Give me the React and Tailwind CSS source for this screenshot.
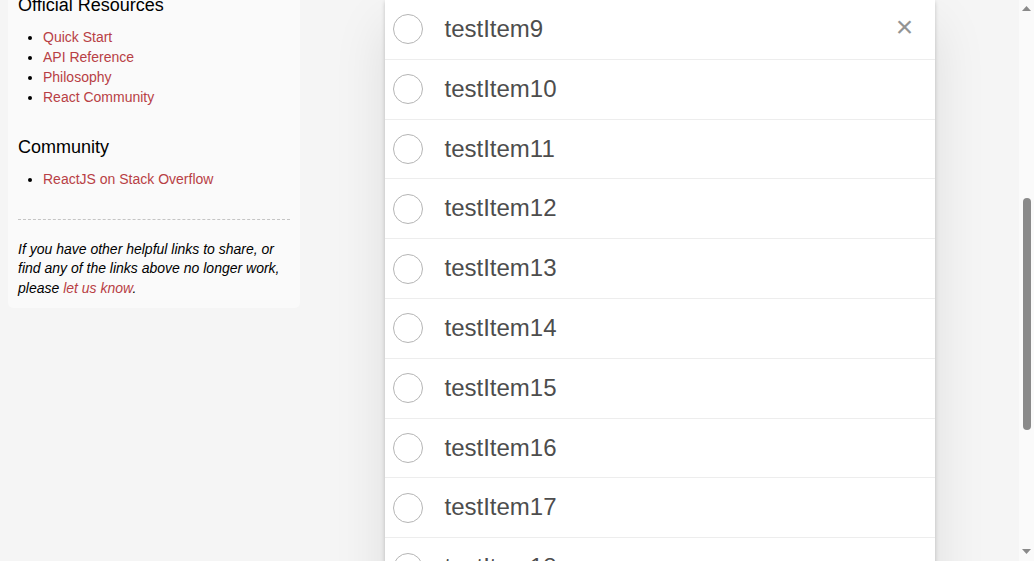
import React from "react";

// Sidebar with learning links, scrolled partly out of view
const Sidebar = () => (
  <aside className="ml-[8px] mt-[-14.6px] w-[292px] shrink-0 rounded-b-[5px] bg-[#fafafa] px-[10px] pb-[10px] text-black">
    <h4 className="my-[10px] text-[18px] leading-[1.2] font-normal">Official Resources</h4>
    <ul className="mb-[30px] ml-[25px] list-disc">
      {["Quick Start", "API Reference", "Philosophy", "React Community"].map((t) => (
        <li key={t} className="leading-[20px]">
          <a href="#" className="text-[#b83f45]">{t}</a>
        </li>
      ))}
    </ul>
    <h4 className="my-[10px] text-[18px] leading-[1.2] font-normal">Community</h4>
    <ul className="mb-[30px] ml-[25px] list-disc">
      <li className="leading-[20px]">
        <a href="#" className="text-[#b83f45]">ReactJS on Stack Overflow</a>
      </li>
    </ul>
    <footer>
      <hr className="my-[20px] border-0 border-t border-dashed border-t-[#c5c5c5]" />
      <em className="block">
        If you have other helpful links to share, or find any of the links above no longer work, please{" "}
        <a href="#" className="text-[#b83f45]">let us know</a>.
      </em>
    </footer>
  </aside>
);

const TodoRow = ({ label, hovered }) => (
  <li className="flex items-center border-b border-[#ededed] text-[24px]">
    <span className="ml-[8px] h-[30px] w-[30px] shrink-0 rounded-full border border-[#b5b5b5]" />
    <label className="flex-1 py-[15px] pl-[22px] pr-[15px] leading-[1.2] text-[#4d4d4d]">{label}</label>
    {hovered && (
      <button className="mr-[10px] flex h-[40px] w-[40px] items-center justify-center pb-[5px] text-[30px] leading-none text-[#949494]">
        ×
      </button>
    )}
  </li>
);

const Scrollbar = () => (
  <div className="flex w-[15px] shrink-0 flex-col items-center bg-[#fafafa]">
    <svg width="9" height="5" viewBox="0 0 9 5" className="mt-[6px]">
      <path d="M4.5 0 L9 5 L0 5 Z" fill="#8a8a8a" />
    </svg>
    <div className="mt-[187px] h-[232px] w-[8px] rounded-full bg-[#8a8a8a]" />
    <svg width="9" height="5" viewBox="0 0 9 5" className="mb-[7px] mt-auto">
      <path d="M0 0 L9 0 L4.5 5 Z" fill="#8a8a8a" />
    </svg>
  </div>
);

export default function App() {
  const items = Array.from({ length: 10 }, (_, i) => `testItem${i + 9}`);

  return (
    <div className="flex h-[561px] w-[1034px] overflow-hidden bg-[#f5f5f5] font-['Liberation_Sans',Arial,sans-serif] text-[14px] leading-[1.4em]">
      <div className="flex min-w-0 flex-1 items-start">
        <Sidebar />
        <main className="flex flex-1 justify-center">
          <section className="w-[550px] bg-white shadow-[0_2px_4px_0_rgba(0,0,0,0.2),0_25px_50px_0_rgba(0,0,0,0.1)]">
            <ul>
              {items.map((t, i) => (
                <TodoRow key={t} label={t} hovered={i === 0} />
              ))}
            </ul>
          </section>
        </main>
      </div>
      <Scrollbar />
    </div>
  );
}
